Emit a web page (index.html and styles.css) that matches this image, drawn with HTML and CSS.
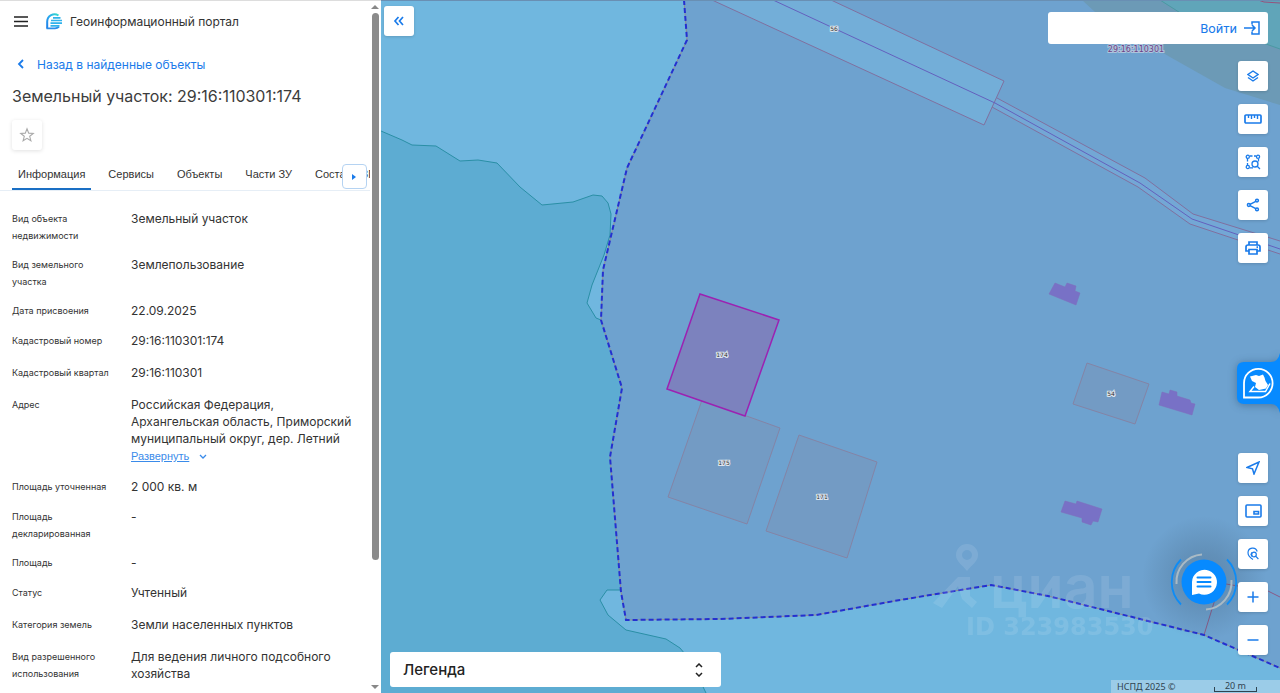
FILE: index.html
```html
<!DOCTYPE html>
<html lang="ru">
<head>
  <meta charset="UTF-8">
  <meta name="viewport" content="width=device-width, initial-scale=1.0">
  <title>Геоинформационный портал</title>
  <link rel="stylesheet" href="styles.css">
</head>
<body>
  <div class="app">
    <aside class="sidebar">
      <div class="panel">
        <header class="header">
          <button class="icon-btn" aria-label="Меню">
            <svg width="14" height="12" viewBox="0 0 14 12"><path d="M0 2h14M0 6.500h14M0 11h14" stroke="#222" stroke-width="1.600"/></svg>
          </button>
          <svg class="logo" width="17" height="17" viewBox="0 0 17 17">
            <defs>
              <linearGradient id="logoFill" x1="0" y1="1" x2="1" y2="0">
                <stop offset="0" stop-color="#1c7ce8"/>
                <stop offset=".5" stop-color="#29a8ee"/>
                <stop offset="1" stop-color="#35dccb"/>
              </linearGradient>
            </defs>
            <path d="M1.200 15.500V8.500A7.300 7.300 0 0 1 12.500 2.500" fill="none" stroke="url(#logoFill)" stroke-width="2"/>
            <path d="M.5 15.300h8.500a7 7 0 0 0 4-1.500" fill="none" stroke="#2a8dea" stroke-width="1.800"/>
            <path d="M7 4.800h7.500M5 7.500h11M4.500 10.200h11.500M4.500 12.800h9" fill="none" stroke="#30b2ec" stroke-width="1.700"/>
          </svg>
          <span class="brand">Геоинформационный портал</span>
        </header>

        <a class="back" href="#">
          <svg width="8" height="10" viewBox="0 0 8 10"><path d="M6 1 2 5l4 4" fill="none" stroke="currentColor" stroke-width="1.800"/></svg>
          <span>Назад в найденные объекты</span>
        </a>

        <h1 class="title">Земельный участок: 29:16:110301:174</h1>

        <button class="favorite" aria-label="В избранное">
          <svg width="16" height="16" viewBox="0 0 16 16"><path d="m8 1.800 1.700 4.300 4.600.3-3.600 2.900 1.200 4.500L8 11.300l-3.900 2.500 1.200-4.500-3.600-2.900 4.600-.3z" fill="none" stroke="#aaa" stroke-width="1.100"/></svg>
        </button>

        <nav class="tabs">
          <a class="tab tab-active" href="#">Информация</a>
          <a class="tab" href="#">Сервисы</a>
          <a class="tab" href="#">Объекты</a>
          <a class="tab" href="#">Части ЗУ</a>
          <a class="tab" href="#">Состав ЕЗП</a>
          <button class="tabs-next" aria-label="Следующие вкладки">
            <svg width="5" height="8" viewBox="0 0 5 8"><path d="M0 1v6l4-3z" fill="#1a7bea"/></svg>
          </button>
        </nav>

        <dl class="info">
          <div class="row"><dt>Вид объекта недвижимости</dt><dd>Земельный участок</dd></div>
          <div class="row"><dt>Вид земельного участка</dt><dd>Землепользование</dd></div>
          <div class="row"><dt>Дата присвоения</dt><dd>22.09.2025</dd></div>
          <div class="row row-tall"><dt>Кадастровый номер</dt><dd>29:16:110301:174</dd></div>
          <div class="row row-tall"><dt>Кадастровый квартал</dt><dd>29:16:110301</dd></div>
          <div class="row">
            <dt>Адрес</dt>
            <dd>
              Российская Федерация,<br>Архангельская область, Приморский муниципальный округ, дер. Летний
              <a class="expand" href="#">
                <span>Развернуть</span>
                <svg width="8" height="6" viewBox="0 0 8 6"><path d="m1 1 3 3 3-3" fill="none" stroke="currentColor" stroke-width="1.300"/></svg>
              </a>
            </dd>
          </div>
          <div class="row"><dt>Площадь уточненная</dt><dd>2 000 кв. м</dd></div>
          <div class="row"><dt>Площадь декларированная</dt><dd>-</dd></div>
          <div class="row"><dt>Площадь</dt><dd>-</dd></div>
          <div class="row row-tall"><dt>Статус</dt><dd>Учтенный</dd></div>
          <div class="row row-tall"><dt>Категория земель</dt><dd>Земли населенных пунктов</dd></div>
          <div class="row"><dt>Вид разрешенного использования</dt><dd>Для ведения личного подсобного хозяйства</dd></div>
        </dl>
      </div>
      <div class="scrollbar">
        <span class="arrow arrow-up"></span>
        <span class="thumb"></span>
        <span class="arrow arrow-down"></span>
      </div>
    </aside>

    <main class="map">
      <svg class="map-canvas" viewBox="381 0 899 693" preserveAspectRatio="xMidYMid slice">
        <defs>
          <radialGradient id="chatShade">
            <stop offset="0" stop-color="#3a5670" stop-opacity=".35"/>
            <stop offset=".4" stop-color="#3a5670" stop-opacity=".24"/>
            <stop offset="1" stop-color="#3a5670" stop-opacity="0"/>
          </radialGradient>
        </defs>
        <rect x="381" width="899" height="693" fill="#70b7df"/>
        <!-- water -->
        <path d="M381 131 402 140 412 145 436 146 460 161 478 160 497 163 520 187 542 205 573 202 593 195 602 196 608 203 611 214 610 235 604 255 592 285 587 303 596 318 601 320 622 388 610 457 621 590 607 590 600 600 608 615 626 630 666 639 680 648 690 660 706 693H381Z" fill="#5dacd2"/>
        <path d="M381 131 402 140 412 145 436 146 460 161 478 160 497 163 520 187 542 205 573 202 593 195 602 196 608 203 611 214 610 235 604 255 592 285 587 303 596 318 601 320M621 590 607 590 600 600 608 615 626 630 666 639 680 648 690 660 706 693" fill="none" stroke="#2a8fa6"/>
        <!-- settlement -->
        <path d="M684 0 687 40 627 168 603 270 601 320 622 388 610 457 621 592 626 620 720 619 816 615 900 600 991 585 1048 596 1204 635 1280 668V0Z" fill="#6ea2cf"/>
        <path d="M1082 0 1095 12 1170 57 1225 88 1280 105V0Z" fill="#6c9ab6"/>
        <path d="M1160 0 1182 14 1280 49V0Z" fill="#60a5b9"/>
        <path d="M1160 0 1182 14 1280 49" fill="none" stroke="#4b99a2"/>
        <path d="M1258 0 1264 2 1280 3" fill="none" stroke="#96527c"/>
        <!-- road -->
        <path d="M712 0 984 125 1004 81 831 0Z" fill="#73aed8"/>
        <path d="M997 98 1145 178 1193 214 1280 241V254L1190 224 1138 187 992 107Z" fill="#73a7d5"/>
        <path d="M712 0 984 125 1004 81 831 0M997 98 1145 178 1193 214 1280 241M992 107 1138 187 1190 224 1280 254" fill="none" stroke="#80709f"/>
        <path d="M773 0 995 103 1140 183 1192 219 1280 249" fill="none" stroke="#6460bd"/>
        <!-- parcels -->
        <g fill="#739bc4" stroke="#8484a6">
          <path d="M702 400 780 428 747 524 668 497Z"/>
          <path d="M799 435 877 462 847 558 766 531Z"/>
          <path d="M1087 363 1149 384 1135 424 1073 404Z"/>
        </g>
        <path d="M700 294 779 320 745 416 667 389Z" fill="#7c82be" stroke="#9c22b2" stroke-width="1.500"/>
        <!-- buildings -->
        <g fill="#7871c6" stroke="#816dba" stroke-width=".5">
          <path d="m1055 283 10 4 2-4 9 3-1 5 5 2-4 12-27-11Z"/>
          <path d="m1162 392 7 2 1-4 7 2v4l13 4 1 3 4 1-3 11-33-10Z"/>
          <path d="m1065 501 11 3 1-3 25 8-4 13-5-1-2 4-9-3v-4l-21-6Z"/>
        </g>
        <path d="M1204 635 1220 583 1268 591 1280 597" fill="none" stroke="#8a5a86"/>
        <path d="M684 0 687 40 627 168 603 270 601 320 622 388 610 457 621 592 626 620 720 619 816 615 900 600 991 585 1048 596 1204 635 1280 668" fill="none" stroke="#8d8c94"/>
        <path d="M684 0 687 40 627 168 603 270 601 320 622 388 610 457 621 592 626 620 720 619 816 615 900 600 991 585 1048 596 1204 635 1280 668" fill="none" stroke="#2430d0" stroke-width="2" stroke-dasharray="5 3"/>
        <g class="parcel-label">
          <text x="834" y="31">56</text>
          <text x="722" y="357">174</text>
          <text x="724" y="465">175</text>
          <text x="822" y="499">171</text>
          <text x="1111" y="396">54</text>
        </g>
        <text class="quarter-label" x="1136" y="52">29:16:110301</text>
        <!-- watermark -->
        <g class="watermark">
          <path fill-rule="evenodd" d="M967 544a11 11 0 0 1 11 11c0 7-7 10-11 16-4-6-11-9-11-16a11 11 0 0 1 11-11Zm0 6a5 5 0 1 0 0 10 5 5 0 0 0 0-10Z"/>
          <path d="m933 603 25-26h12v19l7 6-5 6-10-9-4-13-16 22Z"/>
          <text class="watermark-name" x="990" y="608">циан</text>
          <text class="watermark-id" x="966" y="635">ID 323983530</text>
        </g>
        <circle cx="1204" cy="578" r="62" fill="url(#chatShade)"/>
        <path d="M381 .5H1280" stroke="#698fb3"/>
      </svg>

      <button class="tool collapse" aria-label="Свернуть панель">
        <svg width="12" height="12" viewBox="0 0 12 12"><path d="M5.500 2 2 6l3.500 4M10 2 6.500 6l3.500 4" fill="none" stroke="currentColor" stroke-width="1.700"/></svg>
      </button>

      <a class="login" href="#">
        <span>Войти</span>
        <svg width="16" height="14" viewBox="0 0 16 14"><path d="M8 3.500V1h7v12H8v-2.500M0 7h11M8 4l3 3-3 3" fill="none" stroke="currentColor" stroke-width="1.500"/></svg>
      </a>

      <div class="tools tools-top">
        <button class="tool" aria-label="Слои">
          <svg width="12" height="12" viewBox="0 0 12 12"><path d="m6 1 5 3.500-5 3.500-5-3.500zM1 7.500 6 11l5-3.500" fill="none" stroke="currentColor" stroke-width="1.400"/></svg>
        </button>
        <button class="tool" aria-label="Измерение">
          <svg width="18" height="10" viewBox="0 0 18 10"><rect x="1" y="1" width="16" height="8" rx="1" fill="none" stroke="currentColor" stroke-width="1.700"/><path d="M4.500 1v3M7.500 1v4M10.500 1v3M13.500 1v4" stroke="currentColor" stroke-width="1.400"/></svg>
        </button>
        <button class="tool" aria-label="Поиск по области">
          <svg width="16" height="16" viewBox="0 0 16 16" fill="none" stroke="currentColor" stroke-width="1.300"><circle cx="2.800" cy="2.800" r="1.600"/><circle cx="13" cy="2.800" r="1.600"/><circle cx="2.800" cy="13" r="1.600"/><circle cx="10" cy="10" r="3"/><path d="m12.200 12.200 2.800 2.800M5 2h2.500M9 2h2M2.500 5v2.500M2.500 9v2M13.500 5v2.500M5 13.800h3"/></svg>
        </button>
        <button class="tool" aria-label="Поделиться">
          <svg width="14" height="14" viewBox="0 0 14 14" fill="none" stroke="currentColor" stroke-width="1.500"><circle cx="2.800" cy="7" r="1.400"/><circle cx="11" cy="2.600" r="1.400"/><circle cx="11" cy="11.400" r="1.400"/><path d="M4 6.300 9.800 3.300M4 7.700l5.800 3"/></svg>
        </button>
        <button class="tool" aria-label="Печать">
          <svg width="16" height="14" viewBox="0 0 16 14" fill="none" stroke="currentColor" stroke-width="1.700"><path d="M4 4V1h8v3M4 10H1V6q0-2 2-2h10q2 0 2 2v4h-3"/><path d="M4 8.500h8V13H4zM11.500 6.200h1.500"/></svg>
        </button>
      </div>

      <button class="assistant" aria-label="Открыть виджет">
        <svg width="52" height="76" viewBox="0 0 52 76">
          <path d="M52 8q-2 9-9 9H16q-7 0-7 7v28q0 7 7 7h27q7 0 9 9Z" fill="#078aff"/>
          <path d="M16 52.500V38a14.300 14.300 0 1 1 14.300 14.500Z" fill="none" stroke="#fff" stroke-width="1.800"/>
          <path d="M22 31.500 28 30l3 1 4-1.500 1.500 3 1 3.500 2.500 4-2 3.500-7 1.500-4-3 1-4-4-2Z" fill="#fff"/>
          <path d="m26 41.500-4 5h15.500L42 38.500" fill="none" stroke="#fff" stroke-width="1.500"/>
        </svg>
      </button>

      <div class="tools tools-bottom">
        <button class="tool" aria-label="Моё местоположение">
          <svg width="14" height="14" viewBox="0 0 14 14"><path d="M1 6.500 13 1 8 13 6.500 7.800z" fill="none" stroke="currentColor" stroke-width="1.500"/></svg>
        </button>
        <button class="tool" aria-label="Обзорная карта">
          <svg width="17" height="14" viewBox="0 0 17 14" fill="none" stroke="currentColor" stroke-width="1.600"><rect x="1" y="1" width="15" height="12" rx="1"/><path d="M9 7.500h4.500V10H9z"/></svg>
        </button>
        <button class="tool" aria-label="Поиск на карте">
          <svg width="12" height="14" viewBox="0 0 12 14" fill="none" stroke="currentColor" stroke-width="1.200"><path d="M6 12.500Q1 9.500 1 5.800A4.700 4.700 0 0 1 10.200 4.500"/><circle cx="7" cy="7.500" r="2.300"/><path d="m8.600 9.200 2.800 2.800M5 5.200 4 7.500l1.200 2.200"/></svg>
        </button>
        <button class="tool" aria-label="Приблизить">
          <svg width="12" height="12" viewBox="0 0 12 12"><path d="M6 .5v11M.5 6h11" stroke="currentColor" stroke-width="1.500"/></svg>
        </button>
        <button class="tool" aria-label="Отдалить">
          <svg width="12" height="12" viewBox="0 0 12 12"><path d="M.5 6h11" stroke="currentColor" stroke-width="1.500"/></svg>
        </button>
      </div>

      <button class="chat" aria-label="Чат">
        <svg width="68" height="68" viewBox="0 0 68 68">
          <g fill="none">
            <path d="M11 11.500a32 32 0 0 0 0 45M57 11.500a32 32 0 0 1 0 45" stroke="#0d8cf6" stroke-width="1.800"/>
            <path d="M6.500 36A27.500 27.500 0 0 1 32 6.500M61.500 32A27.500 27.500 0 0 1 36 61.500" stroke="#a9bac5" stroke-width="2"/>
          </g>
          <circle cx="34" cy="34" r="22.500" fill="#078aff"/>
          <path d="M22 47V34a12.500 12.500 0 1 1 7 11.500Z" fill="#fff"/>
          <path d="M27.500 29.500h13M27.500 34h13M27.500 38.500h13" stroke="#078aff" stroke-width="2" stroke-linecap="round"/>
        </svg>
      </button>

      <button class="legend">
        <span>Легенда</span>
        <svg width="8" height="14" viewBox="0 0 8 14"><path d="m1 4 3-3 3 3M1 10l3 3 3-3" fill="none" stroke="currentColor" stroke-width="1.500"/></svg>
      </button>

      <div class="attribution">
        <span>НСПД 2025 ©</span>
        <span class="scale">20 m</span>
      </div>
    </main>
  </div>
</body>
</html>
```
FILE: styles.css
```css
:root {
  --accent: #1a7bea;
  --text: #333;
}

* {
  box-sizing: border-box;
}

body {
  margin: 0;
  font-family: Inter, 'Liberation Sans', sans-serif;
  color: var(--text);
}

button {
  padding: 0;
  border: none;
  font: inherit;
  color: inherit;
  cursor: pointer;
}

a {
  color: inherit;
  text-decoration: none;
}

svg {
  display: block;
}

.app {
  display: grid;
  grid-template-columns: 381px 1fr;
  height: 100vh;
  overflow: hidden;
}

/* sidebar */
.sidebar {
  display: flex;
  min-height: 0;
  background: #fff;
  border-top: 1px solid #ddd;
}

.panel {
  flex: 1;
  min-width: 0;
  overflow: hidden;
}

.header {
  display: flex;
  align-items: center;
  height: 40px;
  padding-left: 14px;
}

.icon-btn {
  background: none;
}

.logo {
  margin-left: 18px;
}

.brand {
  margin-left: 7px;
  font-size: 12px;
}

.back {
  display: flex;
  align-items: center;
  gap: 12px;
  height: 20px;
  margin-top: 13px;
  padding-left: 17px;
  font-size: 12px;
  color: var(--accent);
}

.title {
  margin: 12px 0 14px 12px;
  font-size: 16px;
  line-height: 20px;
  font-weight: 400;
  color: #3c3c3c;
}

.favorite {
  display: grid;
  place-items: center;
  width: 30px;
  height: 30px;
  margin-left: 12px;
  background: #fff;
  border-radius: 3px;
  box-shadow: 0 1px 4px rgba(0, 0, 0, 0.12);
}

.tabs {
  position: relative;
  display: flex;
  gap: 11px;
  height: 32px;
  margin-top: 9px;
  padding-left: 12px;
  margin-right: 1px;
  overflow: hidden;
  border-bottom: 1px solid #e6eef6;
}

.tab {
  flex: none;
  padding: 0 6px;
  font-family: 'Liberation Sans', sans-serif;
  font-size: 11px;
  line-height: 31px;
}

.tab-active {
  border-bottom: 2px solid #1a6fc4;
}

.tabs-next {
  position: absolute;
  right: 3px;
  top: 5px;
  display: grid;
  place-items: center;
  width: 25px;
  height: 25px;
  background: #fff;
  border: 1px solid #b5d3f2;
  border-radius: 4px;
}

.info {
  display: flex;
  flex-direction: column;
  gap: 12px;
  margin: 18px 0 0;
  padding: 0 10px 0 12px;
}

.row {
  display: grid;
  grid-template-columns: 107px 1fr;
  column-gap: 12px;
  min-height: 18px;
}

.row-tall {
  min-height: 20px;
}

.row dt,
.row dd {
  padding-top: 1px;
  margin: 0 0 -1px;
  line-height: 17px;
}

.row dt {
  font-size: 9px;
}

.row dd {
  font-size: 12px;
}

.expand {
  display: flex;
  align-items: center;
  gap: 10px;
  height: 19px;
  font-family: 'Liberation Sans', sans-serif;
  font-size: 11px;
  color: #3a8bea;
}

.expand span {
  text-decoration: underline;
}

.scrollbar {
  display: flex;
  flex-direction: column;
  align-items: center;
  width: 10px;
  padding: 4px 2px 4px 0;
}

.thumb {
  width: 7px;
  height: 80%;
  margin-top: 4px;
  background: #8b8b8b;
  border-radius: 4px;
}

.arrow {
  border: 4px solid transparent;
}

.arrow-up {
  border-top: none;
  border-bottom-color: #888;
}

.arrow-down {
  margin-top: auto;
  border-bottom: none;
  border-top-color: #888;
}

/* map */
.map {
  position: relative;
  min-width: 0;
  overflow: hidden;
}

.map-canvas {
  width: 100%;
  height: 100%;
}

.parcel-label text {
  font: 6px 'DejaVu Sans', sans-serif;
  text-anchor: middle;
  fill: #333;
  stroke: #dce4ec;
  stroke-width: 2px;
  paint-order: stroke;
}

.quarter-label {
  font: 8px 'DejaVu Sans', sans-serif;
  text-anchor: middle;
  fill: #6f3f86;
  stroke: #aec5dc;
  stroke-width: 2px;
  paint-order: stroke;
}

.watermark {
  fill: #fff;
  opacity: 0.1;
}

.watermark-name {
  font: 600 59px Inter, sans-serif;
}

.watermark-id {
  font: 700 24px 'DejaVu Sans', sans-serif;
}

.tool {
  display: grid;
  place-items: center;
  width: 30px;
  height: 30px;
  background: #fff;
  border-radius: 3px;
  box-shadow: 0 1px 3px rgba(0, 0, 0, 0.15);
  color: var(--accent);
}

.collapse {
  position: absolute;
  left: 3px;
  top: 6px;
}

.tools {
  position: absolute;
  right: 12px;
  display: flex;
  flex-direction: column;
  gap: 13px;
}

.tools-top {
  top: 61px;
}

.tools-bottom {
  bottom: 38px;
}

.login {
  position: absolute;
  right: 12px;
  top: 12px;
  display: flex;
  justify-content: flex-end;
  align-items: center;
  gap: 7px;
  width: 220px;
  height: 32px;
  padding-right: 8px;
  background: #fff;
  border-radius: 3px;
  font-family: Roboto, sans-serif;
  font-size: 13px;
  color: var(--accent);
}

.assistant {
  position: absolute;
  right: 0;
  top: 345px;
  background: none;
  filter: drop-shadow(0 1px 4px rgba(20, 50, 80, 0.4));
}

.chat {
  position: absolute;
  right: 42px;
  bottom: 77px;
  background: none;
}

.legend {
  position: absolute;
  left: 9px;
  bottom: 6px;
  display: flex;
  justify-content: space-between;
  align-items: center;
  width: 331px;
  height: 35px;
  padding: 0 18px 0 13px;
  background: #fff;
  border-radius: 3px;
  font-size: 15px;
  font-weight: 500;
  color: #222;
}

.attribution {
  position: absolute;
  right: 0;
  bottom: 0;
  display: flex;
  justify-content: space-between;
  align-items: center;
  width: 169px;
  height: 13px;
  padding: 0 23px 0 6px;
  background: rgba(255, 255, 255, 0.3);
  font: 9px 'Noto Sans', sans-serif;
  color: #2f4350;
}

.scale {
  width: 43px;
  line-height: 10px;
  text-align: center;
  background: linear-gradient(#2f4350, #2f4350) 0 100% / 1px 4px no-repeat,
              linear-gradient(#2f4350, #2f4350) 100% 100% / 1px 4px no-repeat;
  border-bottom: 1px solid #2f4350;
}
```
